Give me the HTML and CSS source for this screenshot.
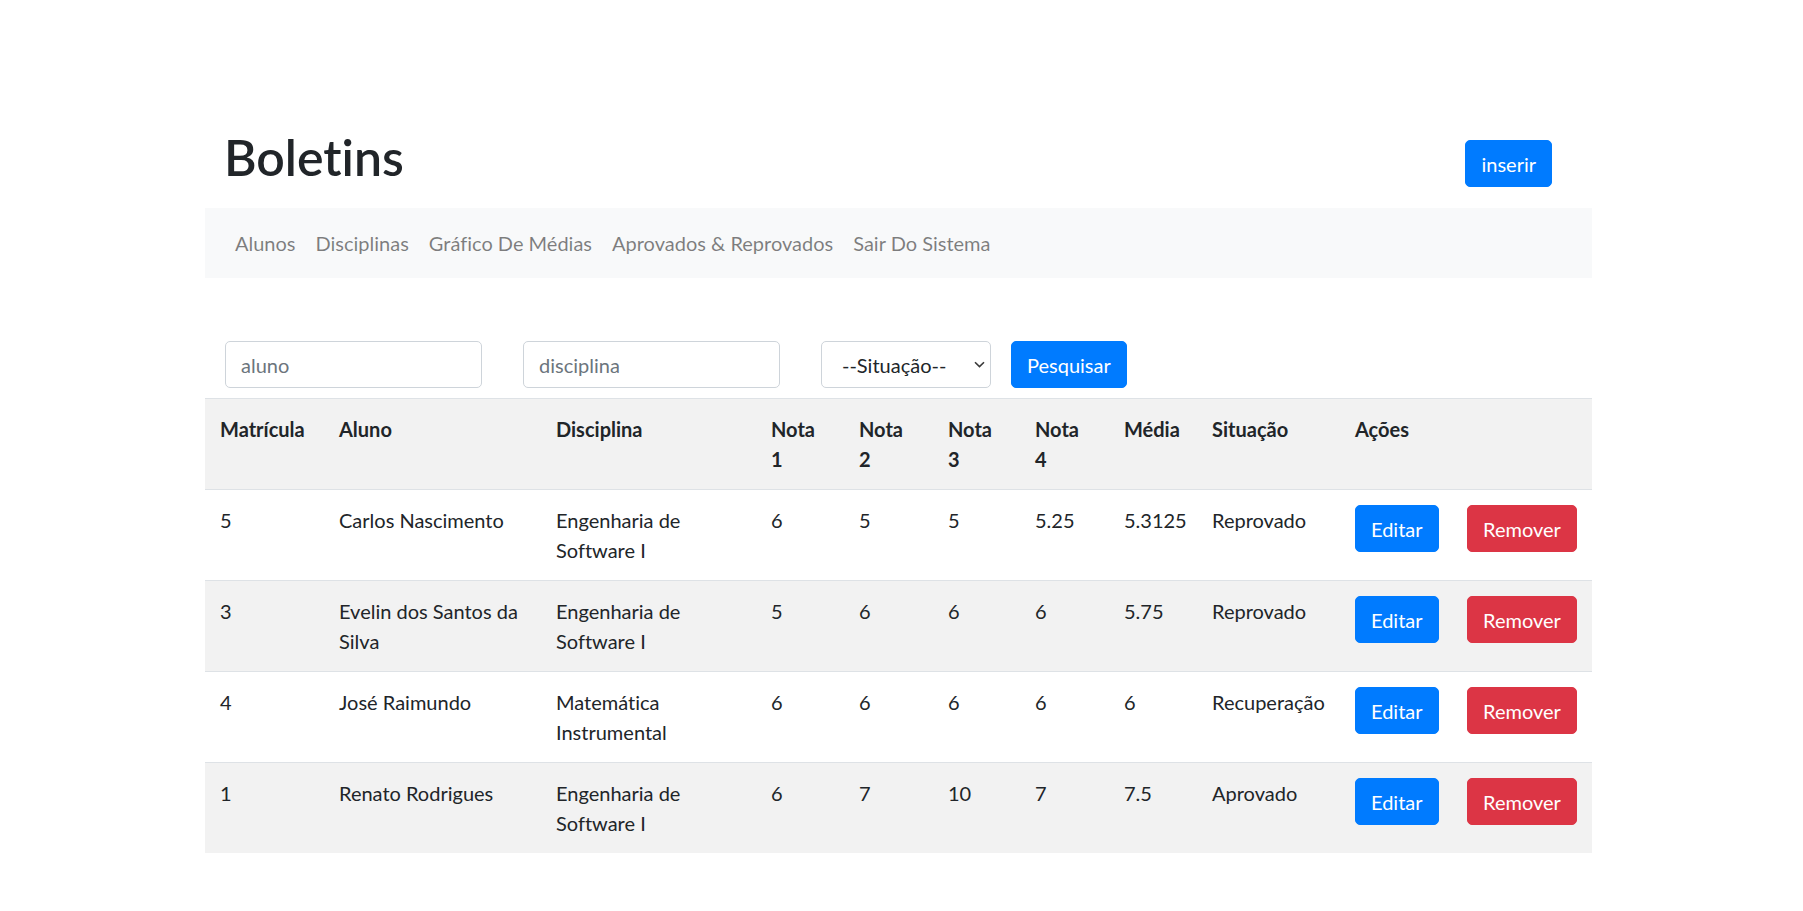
FILE: index.html
```html
<!DOCTYPE html>
<html lang="pt-BR">
<head>
<meta charset="utf-8">
<title>Boletins</title>
<link rel="stylesheet" href="styles.css">
</head>
<body>
<div class="page">
  <header class="top">
    <h1 class="title">Boletins</h1>
    <button class="btn btn-primary btn-insert" type="button">inserir</button>
  </header>

  <nav class="navbar">
    <a class="nav-link" href="#">Alunos</a>
    <a class="nav-link" href="#">Disciplinas</a>
    <a class="nav-link" href="#">Gráfico De Médias</a>
    <a class="nav-link" href="#">Aprovados &amp; Reprovados</a>
    <a class="nav-link" href="#">Sair Do Sistema</a>
  </nav>

  <form class="search">
    <input class="field field-text" type="text" placeholder="aluno">
    <input class="field field-text field-gap" type="text" placeholder="disciplina">
    <div class="select-wrap">
      <select class="field field-select">
        <option>--Situação--</option>
      </select>
      <svg class="chev" width="11" height="7" viewBox="0 0 11 7"><path d="M1 1.2 L5.5 5.6 L10 1.2" fill="none" stroke="#3a3a3a" stroke-width="1.6"/></svg>
    </div>
    <button class="btn btn-primary btn-search" type="button">Pesquisar</button>
  </form>

  <table class="grid">
    <colgroup>
      <col class="w-mat"><col class="w-aluno"><col class="w-disc">
      <col class="w-nota"><col class="w-nota2"><col class="w-nota3"><col class="w-nota2">
      <col class="w-media"><col class="w-sit"><col class="w-acoes"><col class="w-rem">
    </colgroup>
    <tbody>
      <tr>
        <th>Matrícula</th><th>Aluno</th><th>Disciplina</th>
        <th>Nota<br>1</th><th>Nota<br>2</th><th>Nota<br>3</th><th>Nota<br>4</th>
        <th>Média</th><th>Situação</th><th>Ações</th><th></th>
      </tr>
      <tr>
        <td>5</td><td>Carlos Nascimento</td><td>Engenharia de<br>Software I</td>
        <td>6</td><td>5</td><td>5</td><td>5.25</td><td>5.3125</td><td>Reprovado</td>
        <td><button class="btn btn-primary" type="button">Editar</button></td>
        <td><button class="btn btn-danger" type="button">Remover</button></td>
      </tr>
      <tr>
        <td>3</td><td>Evelin dos Santos da<br>Silva</td><td>Engenharia de<br>Software I</td>
        <td>5</td><td>6</td><td>6</td><td>6</td><td>5.75</td><td>Reprovado</td>
        <td><button class="btn btn-primary" type="button">Editar</button></td>
        <td><button class="btn btn-danger" type="button">Remover</button></td>
      </tr>
      <tr>
        <td>4</td><td>José Raimundo</td><td>Matemática<br>Instrumental</td>
        <td>6</td><td>6</td><td>6</td><td>6</td><td>6</td><td>Recuperação</td>
        <td><button class="btn btn-primary" type="button">Editar</button></td>
        <td><button class="btn btn-danger" type="button">Remover</button></td>
      </tr>
      <tr>
        <td>1</td><td>Renato Rodrigues</td><td>Engenharia de<br>Software I</td>
        <td>6</td><td>7</td><td>10</td><td>7</td><td>7.5</td><td>Aprovado</td>
        <td><button class="btn btn-primary" type="button">Editar</button></td>
        <td><button class="btn btn-danger" type="button">Remover</button></td>
      </tr>
    </tbody>
  </table>
</div>
</body>
</html>
```

FILE: styles.css
```css
* { box-sizing: border-box; }

html, body {
  margin: 0;
  padding: 0;
  background: #fff;
}

body {
  font-family: "Segoe UI", Lato, "Noto Sans", sans-serif;
  font-size: 20px;
  line-height: 30px;
  color: #212529;
  font-variant-ligatures: none;
  font-feature-settings: "liga" 0, "clig" 0;
}

.page {
  width: 1387px;
  margin-left: 205px;
  padding-bottom: 40px;
}

/* header */
.top {
  display: flex;
  justify-content: space-between;
  align-items: flex-start;
  padding: 127px 40px 0 19px;
}

.title {
  margin: 0;
  font-size: 50px;
  line-height: 60px;
  font-weight: 600;
  color: #212529;
}

.btn {
  display: inline-block;
  font-family: inherit;
  font-size: 20px;
  line-height: 30px;
  font-weight: 400;
  padding: 7.5px 15px;
  border: 1px solid transparent;
  border-radius: 5px;
  color: #fff;
  cursor: pointer;
  font-variant-ligatures: none;
}

.btn-primary {
  background: #007bff;
  border-color: #007bff;
}

.btn-danger {
  background: #dc3545;
  border-color: #dc3545;
}

.btn-insert {
  margin-top: 13px;
}

/* navbar */
.navbar {
  display: flex;
  align-items: center;
  margin-top: 21px;
  padding: 10px 20px;
  background: #f8f9fa;
}

.nav-link {
  display: block;
  padding: 10px 10px;
  color: rgba(0, 0, 0, 0.5);
  text-decoration: none;
  line-height: 30px;
}

/* search form */
.search {
  display: flex;
  align-items: center;
  margin-top: 63px;
  padding-left: 20px;
}

.field {
  height: 47px;
  font-family: inherit;
  font-size: 20px;
  line-height: 30px;
  color: #495057;
  background: #fff;
  border: 1px solid #ced4da;
  border-radius: 5px;
  padding: 7.5px 15px;
  outline: none;
  font-variant-ligatures: none;
}

.field::placeholder {
  color: #6c757d;
  opacity: 1;
}

.field-text {
  width: 257px;
}

.field-gap {
  margin-left: 41px;
}

.select-wrap {
  position: relative;
  margin-left: 41px;
}

.field-select {
  display: block;
  width: 170px;
  padding: 7.5px 20px 7.5px 20px;
  appearance: none;
  -webkit-appearance: none;
  color: #212529;
}

.chev {
  position: absolute;
  right: 6px;
  top: 20px;
  pointer-events: none;
}

.btn-search {
  margin-left: 20px;
  height: 47px;
}

/* table */
.grid {
  width: 1387px;
  margin-top: 10px;
  border-collapse: collapse;
  table-layout: fixed;
}

.w-mat { width: 119px; }
.w-aluno { width: 217px; }
.w-disc { width: 215px; }
.w-nota { width: 88px; }
.w-nota2 { width: 89px; }
.w-nota3 { width: 87px; }
.w-media { width: 88px; }
.w-sit { width: 143px; }
.w-acoes { width: 112px; }
.w-rem { width: 140px; }

.grid th,
.grid td {
  padding: 15px;
  border-top: 1px solid #dee2e6;
  vertical-align: top;
  text-align: left;
  line-height: 30px;
  white-space: nowrap;
}

.grid th {
  font-weight: 700;
}

.grid tr:nth-child(odd) {
  background: #f2f2f2;
}
```
